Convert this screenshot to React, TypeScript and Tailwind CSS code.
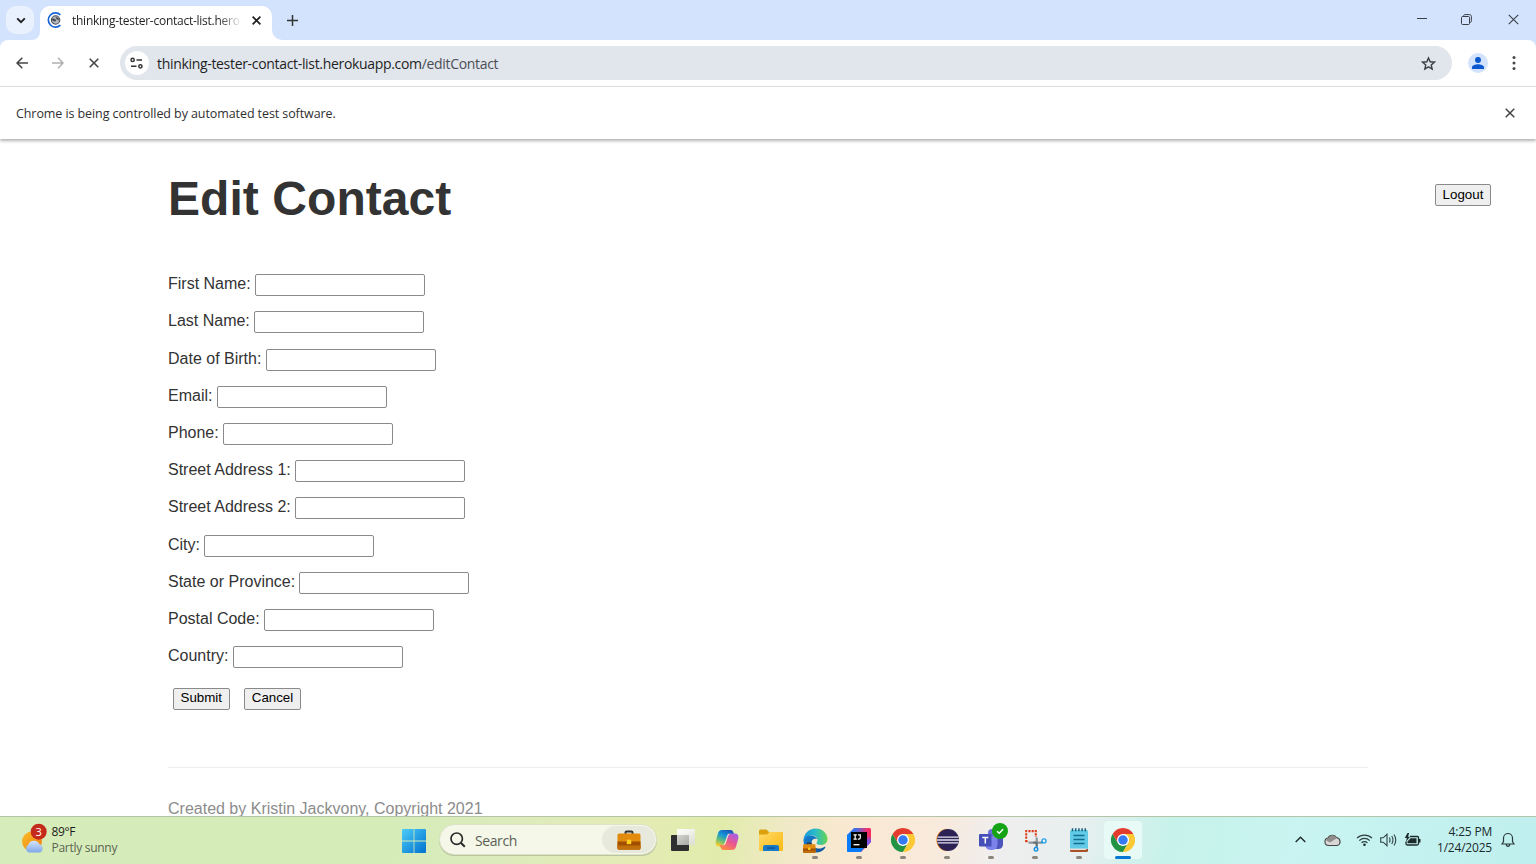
import React from "react";

const UI = "font-['Open_Sans','Noto_Sans',sans-serif]";

const FIELDS = [
  "First Name:",
  "Last Name:",
  "Date of Birth:",
  "Email:",
  "Phone:",
  "Street Address 1:",
  "Street Address 2:",
  "City:",
  "State or Province:",
  "Postal Code:",
  "Country:",
];

function Cross({ size, className = "", width = 1.5 }: { size: number; className?: string; width?: number }) {
  return (
    <svg width={size} height={size} viewBox="0 0 10 10" className={className} fill="none" stroke="currentColor" strokeWidth={(width * 10) / size}>
      <path d="M.7.7l8.6 8.6M9.3.7L.7 9.3" />
    </svg>
  );
}

function TabStrip() {
  return (
    <div className="flex h-10 shrink-0 bg-[#d3e3fd] text-[#1f1f1f]">
      <div className="ml-1.5 mt-1.5 flex h-7 w-7 items-center justify-center rounded-[10px] bg-[#e9f1fe]">
        <svg className="ml-px" width="10" height="7" viewBox="0 0 10 7" fill="none" stroke="currentColor" strokeWidth="1.9">
          <path d="M1.2 1.3L5 5.1l3.8-3.8" />
        </svg>
      </div>
      <div className="relative ml-1.5 mt-1.5 flex h-[34px] w-[232px] items-center rounded-t-[10px] bg-white pb-1.5">
        <svg className="absolute -left-2 bottom-0" width="8" height="8">
          <path d="M8 0v8H0a8 8 0 0 0 8-8" fill="#fff" />
        </svg>
        <svg className="absolute -right-2.5 bottom-0" width="10" height="10">
          <path d="M0 0v10h10A10 10 0 0 1 0 0" fill="#fff" />
        </svg>
        <svg className="ml-[7px]" width="17" height="16" viewBox="0 0 17 16" fill="none">
          <path d="M13.4 2.900A7.100 7.100 0 1 0 13.400 13.100" stroke="#1764d8" strokeWidth="1.7" />
          <circle cx="8.6" cy="8" r="4.2" fill="#b4b8be" stroke="#4b5057" strokeWidth="1.100" />
          <path d="M5 6.6c1.6-.5 2.5.2 3.6 1s.3 1.8-.8 1.9-1.8-.4-2.8-1.4z" fill="#464b52" />
          <path d="M8 4c.7 1.4 2.6 1.2 3.6 2.2l.4 2.2-2.4-1.1z" fill="#464b52" />
        </svg>
        <div className={`${UI} ml-2 mt-px w-[170px] whitespace-nowrap bg-gradient-to-r from-[#1f1f1f] from-[86%] to-transparent bg-clip-text text-[12px] leading-5 tracking-[-0.26px] text-transparent`}>
          thinking-tester-contact-list.hero
        </div>
        <Cross size={9} width={1.7} className="ml-[10px]" />
      </div>
      <svg className="ml-[15px] mt-[15px]" width="11" height="11" viewBox="0 0 11 11" stroke="#333" strokeWidth="1.5">
        <path d="M5.5 0v11M0 5.500h11" />
      </svg>
      <div className="ml-auto flex items-center text-[#3a3f48]">
        <svg width="10" height="10" viewBox="0 0 10 10" stroke="currentColor"><path d="M0 3.500h10" /></svg>
        <svg className="-mt-px ml-[34px]" width="11" height="11" viewBox="0 0 11 11" fill="none" stroke="currentColor">
          <rect x=".5" y="2.500" width="8" height="8" rx="1" />
          <path d="M2.500 2.300C2.600 1 3.200.6 4 .6h4.500c1.200 0 1.900.8 1.900 2v4.200c0 1-.4 1.600-1.600 1.700" />
        </svg>
        <Cross size={11} width={1.1} className="-mt-px ml-9 mr-[17px]" />
      </div>
    </div>
  );
}

function Toolbar() {
  return (
    <div className="shrink-0 bg-[#d3e3fd]">
      <div className="flex h-[46px] items-center rounded-t-lg bg-white text-[#474747]">
        <svg className="ml-4" width="12" height="12" viewBox="0 0 12 12" fill="none" stroke="currentColor" strokeWidth="1.600">
          <path d="M12 6H1.300M6.300.8L1.100 6l5.200 5.200" />
        </svg>
        <svg className="ml-6 text-[#b0b0b0]" width="12" height="12" viewBox="0 0 12 12" fill="none" stroke="currentColor" strokeWidth="1.500">
          <path d="M0 6h11M6 .8L11 6 6 11.200" />
        </svg>
        <Cross size={10} width={1.6} className="ml-[25px]" />
        <div className="ml-[21px] flex h-[34px] w-[1332px] items-center rounded-full bg-[#e1e5ec] pl-[5px] pr-4">
          <div className="flex h-6 w-6 items-center justify-center rounded-full bg-white">
            <svg className="-ml-px" width="13" height="12" viewBox="0 0 13 12" fill="none" stroke="#333" strokeWidth="1.500">
              <circle cx="2.600" cy="2.900" r="1.600" />
              <path d="M6.500 2.900h5.500M1 9.300h5.500" />
              <circle cx="10.400" cy="9.300" r="1.600" />
            </svg>
          </div>
          <div className={`${UI} ml-2 mt-[2px] whitespace-nowrap text-[14px] leading-5 tracking-[-0.32px] text-[#1f1f1f]`}>
            thinking-tester-contact-list.herokuapp.com<span className="text-[#4b4f55]">/editContact</span>
          </div>
          <svg className="ml-auto" width="15" height="15" viewBox="0 0 16 15" fill="none" stroke="#3c3f43" strokeWidth="1.500">
            <path d="M8 1.600l1.800 4.100 4.500.4-3.400 3 1 4.300L8 11.100l-3.900 2.300 1-4.300-3.400-3 4.500-.4z" />
          </svg>
        </div>
        <div className="ml-4 flex h-5 w-5 items-center justify-center rounded-full bg-[#d3e3fd]">
          <svg width="12" height="12" viewBox="0 0 12 12" fill="#0b57d0">
            <circle cx="6" cy="2.900" r="3" />
            <path d="M0 12v-1.600C0 8.300 3.500 7.300 6 7.300s6 1 6 3.100V12z" />
          </svg>
        </div>
        <svg className="ml-6" width="4" height="14" viewBox="0 0 4 14" fill="currentColor">
          <circle cx="2" cy="1.600" r="1.500" /><circle cx="2" cy="7" r="1.500" /><circle cx="2" cy="12.400" r="1.500" />
        </svg>
      </div>
    </div>
  );
}

function PageButton({ children, className = "" }: { children: React.ReactNode; className?: string }) {
  return (
    <button className={`h-[22px] rounded-[2px] border border-[#8a8a8a] bg-[#efefef] pb-px text-[13.33px] leading-[18px] text-black ${className}`}>
      {children}
    </button>
  );
}

function ContactPage() {
  return (
    <main className="relative min-h-0 flex-1 overflow-hidden bg-white pl-[168px] font-['Liberation_Sans',Arial,sans-serif] text-[#333]">
      <div className="flex items-start justify-between pr-[45px]">
        <h1 className="mt-[31px] text-[48px] font-bold leading-[56px] tracking-[0.06px]">Edit Contact</h1>
        <PageButton className="mt-11 w-[56px]">Logout</PageButton>
      </div>
      <form className="mt-[39.600px]">
        {FIELDS.map((label) => (
          <label key={label} className="flex h-[37.200px] items-center text-[16px] leading-6">
            <span className="-mt-[2px] mr-[4.300px]">{label}</span>
            <input className="h-[22px] w-[170px] rounded-[2px] border border-[#8a8a8a] bg-white px-1 text-[13px]" />
          </label>
        ))}
        <div className="mt-[12.200px] flex gap-[14px] pl-[4.500px]">
          <PageButton className="w-[57.500px]">Submit</PageButton>
          <PageButton className="w-[57px]">Cancel</PageButton>
        </div>
      </form>
      <footer className="mt-[57px] w-[1200px] border-t border-[#eee] pt-[29px] text-[16px] leading-6 text-[#8c8c8c]">
        Created by Kristin Jackvony, Copyright 2021
      </footer>
    </main>
  );
}

function ChromeLogo() {
  return (
    <svg width="24" height="24" viewBox="0 0 48 48">
      <path d="M24 0A24 24 0 0 0 3.200 12l10.400 18L24 12h20.800A24 24 0 0 0 24 0" fill="#e33b2e" />
      <path d="M3.200 12A24 24 0 0 0 24 48l10.400-18L24 36l-10.400-6z" fill="#229342" />
      <path d="M44.800 12A24 24 0 0 1 24 48l10.400-18A12 12 0 0 0 24 12z" fill="#fcc934" />
      <circle cx="24" cy="24" r="12" fill="#fff" />
      <circle cx="24" cy="24" r="9.500" fill="#367af1" />
    </svg>
  );
}

function Briefcase({ x = 0, y = 0, s = 1 }: { x?: number; y?: number; s?: number }) {
  return (
    <g transform={`translate(${x} ${y}) scale(${s})`}>
      <path d="M8.500 4V2.500q0-1 1-1h5q1 0 1 1V4" fill="none" stroke="#333" strokeWidth="2" />
      <rect x=".5" y="3.500" width="23" height="16" rx="1.500" fill="#e28a0c" />
      <path d="M.5 11.500h23v6.500q0 1.500-1.500 1.500H2q-1.500 0-1.500-1.500z" fill="#a04f00" />
      <path d="M.5 15.500h23V18q0 1.500-1.500 1.500H2q-1.500 0-1.500-1.500z" fill="#c27009" />
      <rect x="9.800" y="9.700" width="4.400" height="4.400" fill="#ffd21f" />
    </g>
  );
}

function TaskView() {
  return (
    <svg width="24" height="24">
      <defs>
        <linearGradient id="tv" x2="1" y2="1"><stop stopColor="#d4d5d0" /><stop offset="1" stopColor="#a9aaa6" /></linearGradient>
        <linearGradient id="tw" x2=".6" y2="1"><stop stopColor="#fff" /><stop offset="1" stopColor="#dfe2d6" /></linearGradient>
      </defs>
      <rect x="0" y="7" width="18" height="16" rx="1" fill="#2d2f30" />
      <rect x="6" y="1" width="18" height="16" rx="1" fill="url(#tw)" />
      <rect x="6" y="7" width="12" height="10" fill="url(#tv)" />
    </svg>
  );
}

function Copilot() {
  return (
    <svg width="24" height="24" viewBox="0 0 24 24">
      <defs>
        <linearGradient id="cp1" x1=".8" y1="0" x2=".3" y2="1"><stop stopColor="#1b50b8" /><stop offset=".4" stopColor="#1694d8" /><stop offset=".7" stopColor="#5fbd7d" /><stop offset="1" stopColor="#f2cc32" /></linearGradient>
        <linearGradient id="cp2" x1=".8" y1="0" x2=".2" y2="1"><stop stopColor="#a55ee8" /><stop offset=".5" stopColor="#ec568f" /><stop offset="1" stopColor="#ff913d" /></linearGradient>
      </defs>
      <path d="M7 2h8.500q2.200 0 2.900 2.200l.8 2.800h-3q-2 0-2.700 2l-2.500 7.500q-.8 2-2.600 2H4.200Q-.3 18.500.8 13L3 5.200Q4 2 7 2" fill="url(#cp1)" />
      <path d="M17 22H8.500q-2.200 0-2.900-2.200L4.800 17h3q2 0 2.700-2L13 7.500q.8-2 2.600-2h4.200q4.500 0 3.400 5.500L21 18.800q-1 3.200-4 3.200" fill="url(#cp2)" />
      <path d="M12.500 6.700q.5-1 1.500-1h1.200q-1.400.6-1.900 2l-2.500 7.500q-.6 2.100-2.500 2.100H7.200q1.700-.4 2.300-2z" fill="#f3eccd" />
    </svg>
  );
}

function Folder() {
  return (
    <svg width="24" height="24">
      <defs><linearGradient id="fo" x2="1" y2="1"><stop stopColor="#ffda68" /><stop offset="1" stopColor="#fbb911" /></linearGradient></defs>
      <path d="M0 3q0-1.500 1.500-1.500h6L10 4h12.500Q24 4 24 5v8H0z" fill="#dca10f" />
      <path d="M0 6.500h8L10.500 4H22.500Q24 4 24 5.500V21.500q0 1.500-1.500 1.500h-21Q0 23 0 21.500z" fill="url(#fo)" />
      <path d="M4 23v-4q0-2 2-2h12q2 0 2 2v4z" fill="#177ac6" />
      <path d="M8 20h8" stroke="#0b4e85" strokeWidth="1.300" />
    </svg>
  );
}

function Edge() {
  return (
    <svg width="25" height="25" viewBox="0 0 25 25">
      <defs>
        <linearGradient id="ed1" x1="0" y1=".4" x2="1" y2=".4"><stop stopColor="#1896dc" /><stop offset=".5" stopColor="#2bbcc8" /><stop offset="1" stopColor="#67d551" /></linearGradient>
        <linearGradient id="ed2" x2="1" y2="1"><stop stopColor="#1583d5" /><stop offset="1" stopColor="#0b4e97" /></linearGradient>
      </defs>
      <path d="M.5 12.500C.5 6 6 .5 12.500.5c7 0 12 5 12 10.500 0 3.800-3 6-6.500 6-2.800 0-4.500-1-4.500-2 0-.7 1-1.300 1-2.800 0-3-3-4.900-6.300-4.700C4.500 7.700 1.500 9.500.5 12.500" fill="url(#ed1)" />
      <path d="M.5 12.500C1.300 9 4.500 7.300 8 7.500c3 .1 5.500 1.800 6.200 3.500-3.200-1.200-6 1-5.500 4 .6 4 5.300 6.300 9.300 5.400 1.300-.3 2.300-.8 3.300-1.400.7-.4 1.300.2.800.9-2 3-5.800 4.600-9.100 4.600C6 24.500.5 19.500.5 12.500" fill="url(#ed2)" />
      <Briefcase x={-0.2} y={14.3} s={0.54} />
    </svg>
  );
}

function IntelliJ() {
  return (
    <svg width="24" height="24">
      <defs>
        <linearGradient id="ij" x1="0" y1="0" x2="1" y2=".3"><stop stopColor="#087cfa" /><stop offset=".4" stopColor="#4d69dd" /><stop offset=".78" stopColor="#f0306e" /><stop offset="1" stopColor="#f92b5a" /></linearGradient>
        <linearGradient id="ik" x2="0" y2="1"><stop offset=".4" stopColor="#8b50ed" stopOpacity="0" /><stop offset=".65" stopColor="#7a55e8" /></linearGradient>
      </defs>
      <path d="M7 0h15.500Q24 0 24 1.500V14L14 24H1.500Q0 24 0 22.500V7z" fill="url(#ij)" />
      <path d="M18 0h6v14l-6 6z" fill="url(#ik)" />
      <path d="M0 7l5-3v16h12l-3 4H1.500Q0 24 0 22.500z" fill="#0a7cfa" />
      <rect x="4" y="4" width="16" height="16" fill="#000" />
      <path d="M6.500 6.800h3.300M8.150 6.800v4.400M6.500 11.200h3.300M11 6.800h2.300v3q0 1.400-1.300 1.400h-1.200" fill="none" stroke="#fff" strokeWidth="1.200" />
      <path d="M6.500 16.700h6" stroke="#fff" strokeWidth="1.300" />
    </svg>
  );
}

function Eclipse() {
  return (
    <svg width="24" height="24">
      <path d="M11 .8a11.300 11.300 0 0 0 0 22.400l2-2V2z" fill="#f7941e" />
      <circle cx="13" cy="12" r="11" fill="#2c2255" />
      <path d="M2.500 9.200h21M2 12h22M2.500 14.800h21" stroke="#e5e3ee" strokeWidth="1.300" />
    </svg>
  );
}

function Teams() {
  return (
    <svg className="overflow-visible" width="24" height="24">
      <circle cx="13" cy="5" r="4" fill="#6b71d8" />
      <circle cx="20.500" cy="6" r="3" fill="#4d55bd" />
      <path d="M15 9.500h9V16q0 5-5 5h-4z" fill="#4b53bc" />
      <path d="M8 9h10.500v7q0 6-6 6T6 16.500V11q0-2 2-2" fill="#7b83eb" />
      <rect x="0" y="6" width="12.500" height="12.500" rx="1" fill="#464eb8" />
      <path d="M3.300 9.500h6M6.300 9.500v6" stroke="#fff" strokeWidth="1.500" />
      <circle cx="21" cy="3" r="8" fill="#14a314" />
      <path d="M18 3.200l2.200 2.100 3.900-4" fill="none" stroke="#fff" strokeWidth="1.500" />
    </svg>
  );
}

function Snip() {
  return (
    <svg width="24" height="24" fill="none">
      <path d="M3.200 2v12.200M12.800 2v7" stroke="#dd3b16" strokeWidth="2" strokeDasharray="2.200 1.100" />
      <path d="M5.400 3.100h6.500M2.500 13.200h3" stroke="#dd3b16" strokeWidth="2.100" strokeDasharray="2.100 1.100" />
      <path d="M13.700 9.500v10.300M5.500 14.700h14" stroke="#90979c" strokeWidth="2.300" />
      <path d="M10 14.700h3.700v3" stroke="#666d72" strokeWidth="1.800" />
      <circle cx="13" cy="21.300" r="1.800" stroke="#1690dd" strokeWidth="1.400" />
      <circle cx="21" cy="12.900" r="2" stroke="#24a5e8" strokeWidth="1.400" />
      <path d="M18 14.700l1.500-.6M13.700 18v1.500" stroke="#1690dd" strokeWidth="1.500" />
    </svg>
  );
}

function Notepad() {
  return (
    <svg width="24" height="24">
      <rect x="3" y="2" width="18" height="21.500" rx="1.500" fill="#61cae4" />
      <path d="M3 21h18v1.500q0 1.500-1.500 1.500h-15Q3 24 3 22.500z" fill="#a9522a" />
      <path d="M3 22h15.500l2-1.500H3z" fill="#e5e2dd" />
      <path d="M5.500.3v3M8.700.3v3M11.900.3v3M15.100.3v3M18.300.3v3" stroke="#195e80" strokeWidth="1.500" />
      <path d="M6.500 7.500h11M6.500 11.500h11M6.500 15.500h11" stroke="#136e94" strokeWidth="1.500" />
    </svg>
  );
}

const APPS: { icon: React.ReactNode; state: "none" | "open" | "active" }[] = [
  { icon: <TaskView />, state: "none" },
  { icon: <Copilot />, state: "none" },
  { icon: <Folder />, state: "none" },
  { icon: <Edge />, state: "open" },
  { icon: <IntelliJ />, state: "open" },
  { icon: <ChromeLogo />, state: "open" },
  { icon: <Eclipse />, state: "open" },
  { icon: <Teams />, state: "open" },
  { icon: <Snip />, state: "open" },
  { icon: <Notepad />, state: "open" },
  { icon: <ChromeLogo />, state: "active" },
];

const PILL = { none: "bg-transparent w-1.5", open: "bg-[#8b857c] w-1.5", active: "bg-[#0078d4] w-4" };

function Taskbar() {
  return (
    <div className={`${UI} flex h-12 shrink-0 items-stretch border-t border-[#b5c3a6] bg-[linear-gradient(100deg,#d6ecba_0%,#d5ecb9_25%,#dcebbc_33%,#e4ebb5_41%,#e1ecac_47%,#f0e9c6_51%,#f9e8d1_55%,#f8eadc_61%,#efeeee_65%,#e8efef_70%,#c6f2ea_76%,#c9f4f1_84%,#bfefee_100%)]`}>
      <div className="flex w-[392px] items-center pb-[2px] pl-5">
        <svg width="28" height="34" viewBox="0 0 28 34">
          <defs>
            <linearGradient id="sun" x2="1" y2="1"><stop stopColor="#fbbd25" /><stop offset="1" stopColor="#ee7b13" /></linearGradient>
            <linearGradient id="cl" x2="0" y2="1"><stop stopColor="#d5e5fd" /><stop offset="1" stopColor="#7fa7ea" /></linearGradient>
          </defs>
          <circle cx="12" cy="18.500" r="10" fill="url(#sun)" />
          <path d="M8.500 29.500a4.300 4.300 0 0 1-.2-7.700 6 6 0 0 1 11-.7 4.500 4.500 0 0 1 .7 8.400z" fill="url(#cl)" />
          <circle cx="18.700" cy="8.700" r="8" fill="#c42b1c" />
          <text x="18.700" y="12.700" textAnchor="middle" fontSize="11" fill="#fff">3</text>
        </svg>
        <div className="ml-[3.500px] text-[12px] leading-4">
          <div className="tracking-[-0.400px] text-[#1c1c1c]">89°F</div>
          <div className="tracking-[-0.280px] text-[#5c6553]">Partly sunny</div>
        </div>
      </div>
      <div className="flex w-11 items-center justify-center">
        <svg width="24" height="24">
          <defs><linearGradient id="win" gradientUnits="userSpaceOnUse" x1="0" y1="0" x2="24" y2="24"><stop stopColor="#4ccdf7" /><stop offset="1" stopColor="#0070cf" /></linearGradient></defs>
          <path d="M1 0h10.600v11.600H0V1q0-1 1-1M12.400 0H23q1 0 1 1v10.600H12.400zM0 12.400h11.600V24H1q-1 0-1-1zM12.400 12.400H24V23q0 1-1 1H12.400z" fill="url(#win)" />
        </svg>
      </div>
      <div className="ml-[3px] mt-[7px] flex h-[31px] w-[218px] items-center rounded-full border border-[#dce3c6] bg-[#f5f8e9] pl-[10px] pr-px shadow-[0_1px_0_#bac5a0]">
        <svg width="16" height="16" fill="none" stroke="#2b2b2b" strokeWidth="1.700">
          <circle cx="6.700" cy="6.700" r="5.700" /><path d="M10.800 10.800l4 4" strokeWidth="2" />
        </svg>
        <span className="ml-[9px] mt-[2px] text-[14px] leading-5 tracking-[-0.400px] text-[#5c5f56]">Search</span>
        <div className="ml-auto flex h-[27px] w-[53px] items-center justify-center rounded-full bg-[#e7e9dd]">
          <svg width="24" height="20"><Briefcase /></svg>
        </div>
      </div>
      <div className="ml-[4px] flex">
        {APPS.map(({ icon, state }, i) => (
          <div key={i} className="flex w-11 justify-center pt-1">
            <div className={`flex h-[38px] w-[38px] flex-col items-center rounded pt-[7px] ${state === "active" ? "bg-[#e8faf6]" : ""}`}>
              <div className="flex h-6 items-center">{icon}</div>
              <div className={`mt-1 h-[3px] shrink-0 rounded-full ${PILL[state]}`} />
            </div>
          </div>
        ))}
      </div>
      <div className="ml-auto flex items-center pb-[2px] text-[#1d2b2c]">
        <svg width="11" height="7" fill="none" stroke="currentColor" strokeWidth="1.400"><path d="M.7 6l4.800-4.800L10.300 6" /></svg>
        <svg className="ml-[18px]" width="18" height="14">
          <path d="M4.500 12.500A3.800 3.800 0 0 1 3.900 5 5 5 0 0 1 12.500 4.500a4.200 4.200 0 0 1 1 8z" fill="#d9d7d6" stroke="#444" strokeWidth="1.100" />
          <path d="M2 7.200Q3 4.800 5 4.700 7 1.500 10 2.500q2.500 1 2.700 2.700L6 9.500z" fill="#8f8d8b" />
        </svg>
        <svg className="ml-[14px]" width="17" height="14" fill="none" stroke="#2e4142" strokeWidth="1.200">
          <path d="M1 5.200a10.500 10.500 0 0 1 15 0M3.300 7.600a7.300 7.300 0 0 1 10.400 0M5.500 9.800a4.200 4.200 0 0 1 6 0" />
          <circle cx="8.500" cy="11.700" r="1.300" fill="#1d2b2c" stroke="none" />
        </svg>
        <svg className="ml-[7px]" width="17" height="14" fill="none" stroke="#2e4142" strokeWidth="1.100">
          <path d="M.7 4.800h2.500L7 1.300v11.400L3.200 9.200H.7z" />
          <path d="M9.300 4.500q1.500 2.500 0 5M11.700 3q2.600 4 0 8M14 1.500q3.600 5.500 0 11" />
        </svg>
        <svg className="ml-[7px]" width="17" height="14">
          <path d="M6 3.500h7.500q1 0 1 1v6q0 1.500-1.500 1.500H3.500Q2 12 2 10.500V8.500" fill="none" stroke="currentColor" strokeWidth="1.300" />
          <path d="M6.500 5.300h6v4.900h-9V8.500z" fill="currentColor" />
          <path d="M3.500 0L.8 5h2L2 8.800 6 3.700H4L5.200 0zM15 6h1.500v3.500H15z" fill="currentColor" />
        </svg>
        <div className="ml-[9px] w-[62px] whitespace-nowrap text-right text-[12px] leading-4 tracking-[-0.200px]">
          <div>4:25 PM</div>
          <div>1/24/2025</div>
        </div>
        <svg className="ml-[9px] mr-[21px]" width="14" height="16" fill="none" stroke="#2b3a3b" strokeWidth="1.200">
          <path d="M2.500 6a4.500 4.500 0 0 1 9 0v3.500L13 12H1l1.500-2.500zM5.200 12.500q.4 1.800 1.800 1.800t1.800-1.800" />
        </svg>
      </div>
    </div>
  );
}

export default function App() {
  return (
    <div className="flex h-[864px] w-[1536px] flex-col overflow-hidden bg-white">
      <TabStrip />
      <Toolbar />
      <div className="relative z-10 flex h-[53px] shrink-0 items-center justify-between border-t border-[#dcdedf] bg-white pl-4 pr-[21px] shadow-[0_2px_3px_rgba(0,0,0,0.3)]">
        <span className={`${UI} mt-[2px] text-[12.500px] leading-5 tracking-[-0.085px] text-[#303030]`}>Chrome is being controlled by automated test software.</span>
        <Cross size={10} width={1.5} className="text-[#444]" />
      </div>
      <div className="flex min-h-0 flex-1 flex-col bg-white pt-px">
        <ContactPage />
      </div>
      <Taskbar />
    </div>
  );
}
